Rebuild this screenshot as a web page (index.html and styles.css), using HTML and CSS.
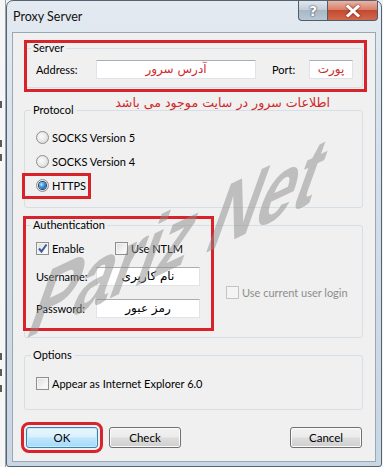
FILE: index.html
```html
<!DOCTYPE html>
<html lang="en">
<head>
    <meta charset="UTF-8">
    <meta name="viewport" content="width=device-width, initial-scale=1.0">
    <title>Proxy Server</title>
    <link rel="stylesheet" href="styles.css">
</head>
<body>
    <div class="screen">
        <div class="behind">
            <span class="tick t1"></span>
            <span class="tick t2"></span>
            <span class="tick t3"></span>
            <span class="tick t4"></span>
            <span class="tick t5"></span>
            <span class="tick t6"></span>
        </div>
        <div class="window">
            <div class="titlebar">
                <span class="title">Proxy Server</span>
                <div class="caption">
                    <span class="cap-btn help">?</span>
                    <span class="cap-btn close">
                        <svg width="16" height="12" viewBox="0 0 16 12"><path d="M3 1.5 L13 10.5 M13 1.5 L3 10.5" stroke="#fff" stroke-width="3" stroke-linecap="square"/></svg>
                    </span>
                </div>
            </div>

            <div class="client">
                <fieldset class="group server">
                    <legend>Server</legend>
                    <div class="line">
                        <label class="lbl lbl-addr">Address:</label>
                        <div class="field f-addr red-text" dir="rtl">آدرس سرور</div>
                        <label class="lbl lbl-port">Port:</label>
                        <div class="field f-port red-text" dir="rtl">پورت</div>
                    </div>
                    <span class="mark mark-server"></span>
                </fieldset>

                <p class="note" dir="rtl">اطلاعات سرور در سایت موجود می باشد</p>

                <fieldset class="group protocol">
                    <legend>Protocol</legend>
                    <div class="opt"><span class="radio"></span>SOCKS Version 5</div>
                    <div class="opt"><span class="radio"></span>SOCKS Version 4</div>
                    <div class="opt https"><span class="radio on"></span>HTTPS<span class="mark mark-https"></span></div>
                </fieldset>

                <fieldset class="group auth">
                    <legend>Authentication</legend>
                    <div class="checks">
                        <div class="opt enable">
                            <span class="cb">
                                <svg width="11" height="11" viewBox="0 0 11 11"><path d="M2 5.5 L4.5 8.5 L9.5 1.5" fill="none" stroke="#3d5a9c" stroke-width="2"/></svg>
                            </span>Enable
                        </div>
                        <div class="opt"><span class="cb"></span>Use NTLM</div>
                    </div>
                    <div class="creds">
                        <div class="cred-fields">
                            <div class="line">
                                <label class="lbl">Username:</label>
                                <div class="field f-cred" dir="rtl">نام کاربری</div>
                            </div>
                            <div class="line">
                                <label class="lbl">Password:</label>
                                <div class="field f-cred" dir="rtl">رمز عبور</div>
                            </div>
                        </div>
                        <div class="opt disabled"><span class="cb"></span>Use current user login</div>
                    </div>
                    <span class="mark mark-auth"></span>
                </fieldset>

                <fieldset class="group options">
                    <legend>Options</legend>
                    <div class="opt"><span class="cb"></span>Appear as Internet Explorer 6.0</div>
                </fieldset>

                <div class="buttons">
                    <button class="btn btn-ok">OK</button>
                    <button class="btn">Check</button>
                    <button class="btn btn-cancel">Cancel</button>
                </div>

                <div class="watermark">Pariz Net</div>
            </div>
        </div>
    </div>
</body>
</html>
```

FILE: styles.css
```css
body {
    margin: 0;
    padding: 0;
    font-family: Lato, "DejaVu Sans", sans-serif;
    font-size: 11px;
    color: #000;
    background: #eef1f4;
}
.screen {
    display: flex;
    width: 383px;
    height: 467px;
    overflow: hidden;
}

/* window sitting behind the dialog */
.behind {
    width: 6px;
    flex: none;
    display: flex;
    flex-direction: column;
    background: #f6f6f6;
    border-right: 1px solid #9aa4ae;
    box-sizing: border-box;
}
.tick {
    display: block;
    width: 2px;
    height: 7px;
    background: #5a5a5a;
}
.t1 { margin-top: 101px; }
.t2 { margin-top: 32px; }
.t3 { margin-top: 7px; }
.t4 { margin-top: 192px; }
.t5 { margin-top: 9px; }
.t6 { margin-top: 9px; }

/* dialog frame */
.window {
    width: 376px;
    flex: none;
    display: flex;
    flex-direction: column;
    box-sizing: border-box;
    border: 1px solid #56626f;
    border-radius: 7px 7px 3px 3px;
    background: linear-gradient(180deg, #e3eaf1 0%, #d3dee9 40%, #c9d6e3 100%);
}
.titlebar {
    height: 31px;
    display: flex;
    padding-left: 6px;
}
.title {
    padding-top: 8px;
    font-size: 12.5px;
    color: #111;
}
.caption {
    margin-left: auto;
    margin-right: 3px;
    display: flex;
    align-self: flex-start;
}
.cap-btn {
    height: 20px;
    box-sizing: border-box;
    display: flex;
    align-items: center;
    justify-content: center;
    border: 1px solid #505c68;
    border-top: none;
}
.help {
    width: 30px;
    border-radius: 0 0 0 4px;
    background: linear-gradient(180deg, #dfe6ed 0%, #c3ced9 45%, #a9b8c6 50%, #b9c7d4 100%);
    color: #fff;
    font: bold 14px "DejaVu Sans", sans-serif;
    text-shadow: 0 0 2px #3b4652, 0 0 1px #3b4652;
}
.close {
    width: 50px;
    border-left: none;
    border-radius: 0 0 4px 0;
    background: linear-gradient(180deg, #eab4a6 0%, #d9806a 45%, #c34a30 50%, #d1694c 100%);
}
.close svg {
    filter: drop-shadow(0 0 1px #6b1d10);
}

/* client area */
.client {
    position: relative;
    margin: 0 5px 4px 5px;
    height: 430px;
    box-sizing: border-box;
    border: 1px solid #9aa8b6;
    background: #f0f0f0;
    padding: 8px 11px 0 11px;
    overflow: hidden;
}

.group {
    position: relative;
    margin: 0;
    width: 339px;
    box-sizing: border-box;
    border: 1px solid #d5dfe5;
    border-radius: 3px;
    padding: 0 9px 0 11px;
}
.group legend {
    margin-left: -5px;
    padding: 0 2px;
    line-height: 14px;
    color: #000;
}
.server { padding-top: 5px; padding-bottom: 8px; }
.protocol { margin-top: -9px; padding-top: 8px; padding-bottom: 10px; }
.auth { margin-top: 10px; padding-top: 6px; padding-bottom: 19px; }
.options { margin-top: 10px; padding-top: 11px; padding-bottom: 16px; }

/* red hint written under the server box */
.note {
    position: relative;
    z-index: 1;
    margin: 6px 0 0 0;
    width: 339px;
    padding-right: 33px;
    box-sizing: border-box;
    height: 18px;
    font-family: "DejaVu Sans", sans-serif;
    font-size: 12.6px;
    line-height: 18px;
    color: #cf2a2a;
    white-space: nowrap;
}

.line {
    display: flex;
    align-items: center;
}
.lbl {
    width: 60px;
    flex: none;
}
.lbl-port {
    width: 37px;
    margin-left: 16px;
}
.field {
    height: 19px;
    box-sizing: border-box;
    background: #fff;
    border: 1px solid #e2e3ea;
    border-top-color: #abadb3;
    text-align: center;
    font-family: "DejaVu Sans", sans-serif;
    font-size: 12px;
    line-height: 17px;
}
.f-addr { width: 160px; }
.f-port { width: 44px; }
.f-cred { width: 104px; }
.red-text { color: #d22b2b; }

.opt {
    position: relative;
    display: flex;
    align-items: center;
    gap: 3px;
    height: 24px;
    white-space: nowrap;
}
.radio {
    width: 13px;
    height: 13px;
    box-sizing: border-box;
    border-radius: 50%;
    border: 1px solid #8e8f8f;
    background: radial-gradient(circle at 40% 40%, #fbfbfb 0%, #e6e6e6 55%, #cfcfcf 100%);
    display: flex;
    align-items: center;
    justify-content: center;
}
.radio.on::after {
    content: "";
    width: 7px;
    height: 7px;
    border-radius: 50%;
    background: radial-gradient(circle at 35% 35%, #b7e8ff 0%, #3b8fd6 45%, #14468c 100%);
    box-shadow: 0 0 0 1px #1b3f6e;
}
.cb {
    width: 13px;
    height: 13px;
    box-sizing: border-box;
    border: 1px solid #8e8f8f;
    background: linear-gradient(135deg, #dcdcdc 0%, #f3f3f3 60%, #ffffff 100%);
    box-shadow: inset 0 0 0 1px #f4f4f4;
    display: flex;
    align-items: center;
    justify-content: center;
    flex: none;
}
.cb svg { display: block; }

.checks {
    display: flex;
    height: 20px;
}
.checks .opt { height: 20px; }
.enable { width: 79px; }
.creds {
    margin-top: 9px;
    display: flex;
    align-items: center;
}
.cred-fields {
    display: flex;
    flex-direction: column;
    gap: 13px;
}
.disabled {
    margin-left: 26px;
    color: #8d8d8d;
}
.disabled .cb {
    border-color: #c4c4c4;
    background: #f4f4f4;
}
.options .opt { height: 20px; }

/* red annotation boxes drawn over the dialog */
.mark {
    position: absolute;
    box-sizing: border-box;
    border: 3px solid #d8232a;
    pointer-events: none;
}
.mark-server { left: -1px; top: -15px; width: 343px; height: 52px; }
.mark-https { left: -14px; top: 0; width: 69px; height: 26px; }
.mark-auth { left: -2px; top: -16px; width: 191px; height: 115px; }

.buttons {
    display: flex;
    margin-top: 17px;
    padding: 0 2px;
}
.btn {
    width: 72px;
    height: 21px;
    margin: 0;
    padding: 0;
    font-family: Lato, sans-serif;
    font-size: 11.5px;
    color: #000;
    border: 1px solid #707070;
    border-radius: 3px;
    background: linear-gradient(180deg, #f2f2f2 0%, #ebebeb 48%, #dddddd 52%, #cfcfcf 100%);
    box-shadow: inset 0 0 0 1px #fbfbfb;
}
.btn + .btn { margin-left: 11px; }
.btn-ok {
    border-color: #3c7fb1;
    background: linear-gradient(180deg, #eaf6fd 0%, #d9f0fc 48%, #bee6fd 52%, #a7d9f5 100%);
    box-shadow: inset 0 0 0 1px #c5ecff;
    outline: 3px solid #d8232a;
    outline-offset: 2px;
}
.btn-cancel { margin-left: auto !important; }

/* slanted watermark over the whole dialog */
.watermark {
    position: absolute;
    left: 10px;
    top: 222px;
    z-index: 2;
    font-family: "Liberation Sans", sans-serif;
    font-weight: bold;
    font-size: 100px;
    line-height: 100px;
    color: rgba(140, 140, 140, 0.5);
    white-space: nowrap;
    transform-origin: 0 85px;
    transform: matrix(0.67, -0.32, -0.36, 1, 0, 0);
    pointer-events: none;
}
```
